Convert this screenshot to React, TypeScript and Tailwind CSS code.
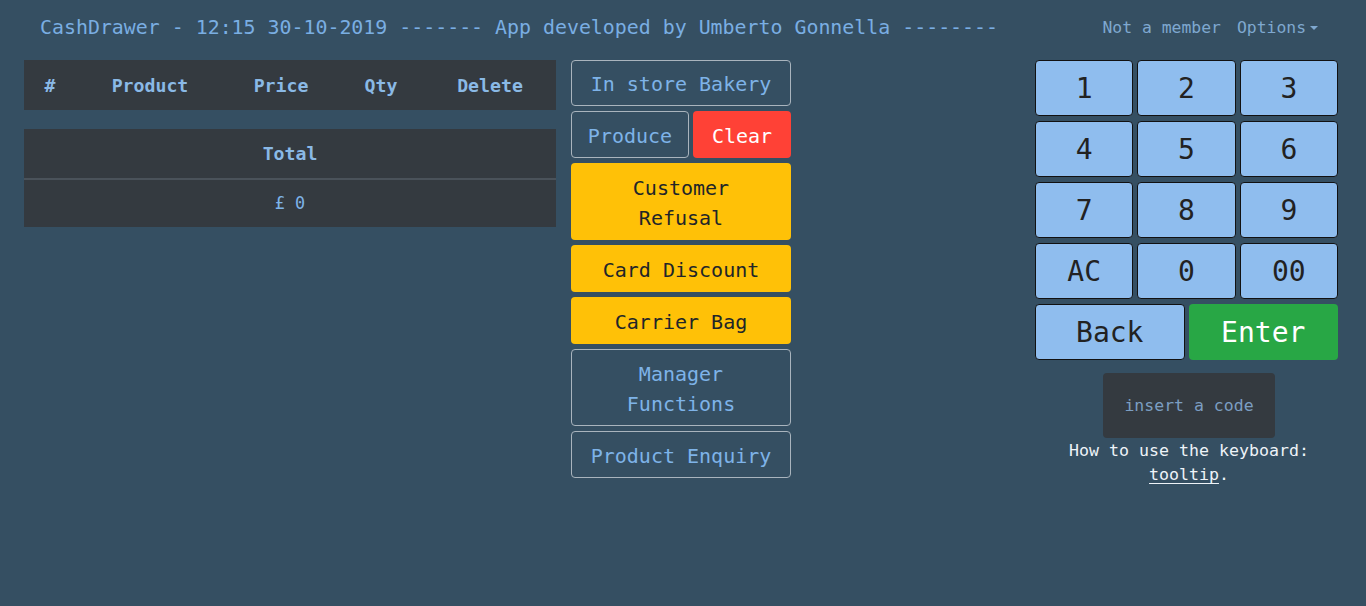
import React from "react";

const mono = { fontFamily: '"DejaVu Sans Mono", "Liberation Mono", monospace' };

const keys = ["1", "2", "3", "4", "5", "6", "7", "8", "9", "AC", "0", "00"];

function OutlineBtn({ label, h, className = "" }: { label: React.ReactNode; h: string; className?: string }) {
  return (
    <button
      type="button"
      className={`${h} ${className} rounded-[4px] border border-[#a9b4bd] bg-transparent pt-[2px] text-[20px] leading-[30px] text-[#7eb3e8]`}
    >
      {label}
    </button>
  );
}

function YellowBtn({ label, h }: { label: React.ReactNode; h: string }) {
  return (
    <button
      type="button"
      className={`${h} w-full rounded-[4px] bg-[#ffc107] pt-[2px] text-[20px] leading-[30px] text-[#212529]`}
    >
      {label}
    </button>
  );
}

export default function App() {
  return (
    <div className="min-h-[606px] w-full bg-[#354f62]" style={mono}>
      {/* top bar */}
      <div className="flex h-[54px] items-center pl-[40px] pr-[48px] pt-[2px]">
        <span className="text-[19.9px] text-[#7aaee2]">
          CashDrawer - 12:15 30-10-2019 ------- App developed by Umberto Gonnella --------
        </span>
        <div className="ml-auto flex items-center gap-[16px] text-[16.4px] text-[#7fa8cf]">
          <span>Not a member</span>
          <span className="flex items-center">
            Options
            <span className="ml-[4px] mt-[1px] h-0 w-0 border-x-[4px] border-t-[4px] border-x-transparent border-t-[#7fa8cf]" />
          </span>
        </div>
      </div>

      <div className="mt-[6px] flex pl-[24px] pr-[28px]">
        {/* cart table */}
        <div className="w-[532px]">
          <div className="flex h-[50px] items-center bg-[#343a40] pt-[2px] text-[18.2px] font-bold text-[#8ab9e6]">
            <div className="w-[52px] text-center">#</div>
            <div className="w-[148px] text-center">Product</div>
            <div className="w-[114px] text-center">Price</div>
            <div className="w-[86px] text-center">Qty</div>
            <div className="w-[132px] text-center">Delete</div>
          </div>
          <div className="mt-[19px] bg-[#343a40]">
            <div className="flex h-[49px] items-center justify-center text-[18.2px] font-bold text-[#8ab9e6]">
              Total
            </div>
            <div className="flex h-[49px] items-center justify-center border-t-2 border-[#4a525a] pt-[1px] text-[16.8px] text-[#7eb3e8]">
              £ 0
            </div>
          </div>
        </div>

        {/* action buttons */}
        <div className="ml-[15px] flex w-[220px] flex-col gap-[5px]">
          <OutlineBtn label="In store Bakery" h="h-[46px]" className="w-full" />
          <div className="flex gap-[4px]">
            <OutlineBtn label="Produce" h="h-[47px]" className="w-[118px]" />
            <button
              type="button"
              className="h-[47px] flex-1 rounded-[4px] bg-[#ff4136] pt-[2px] text-[20px] text-white"
            >
              Clear
            </button>
          </div>
          <YellowBtn label={<>Customer<br />Refusal</>} h="h-[77px]" />
          <YellowBtn label="Card Discount" h="h-[47px]" />
          <YellowBtn label="Carrier Bag" h="h-[47px]" />
          <OutlineBtn label={<>Manager<br />Functions</>} h="h-[77px]" className="w-full" />
          <OutlineBtn label="Product Enquiry" h="h-[47px]" className="w-full" />
        </div>

        {/* keypad */}
        <div className="ml-auto w-[303px]">
          <div className="grid grid-cols-3 gap-x-[4px] gap-y-[5px]">
            {keys.map((k) => (
              <button
                key={k}
                type="button"
                className="h-[56px] rounded-[4px] border border-[#111] bg-[#8fbdee] pt-[2px] text-[28px] text-[#222]"
              >
                {k}
              </button>
            ))}
          </div>
          <div className="mt-[5px] grid grid-cols-2 gap-[4px]">
            <button
              type="button"
              className="h-[56px] rounded-[4px] border border-[#111] bg-[#8fbdee] pt-[2px] text-[28px] text-[#222]"
            >
              Back
            </button>
            <button
              type="button"
              className="h-[56px] rounded-[4px] bg-[#28a745] pt-[2px] text-[28px] text-white"
            >
              Enter
            </button>
          </div>
          <div className="ml-[68px] mt-[13px] flex h-[65px] w-[172px] items-center justify-center rounded-[4px] bg-[#343a40] pt-[1px] text-[16.5px] text-[#7c9ec2]">
            insert a code
          </div>
          <div className="ml-[5px] mt-[1px] text-center text-[16.6px] leading-[24px] text-[#eef3f8]">
            How to use the keyboard:
            <br />
            <span className="underline underline-offset-[3px]">tooltip</span>.
          </div>
        </div>
      </div>
    </div>
  );
}
